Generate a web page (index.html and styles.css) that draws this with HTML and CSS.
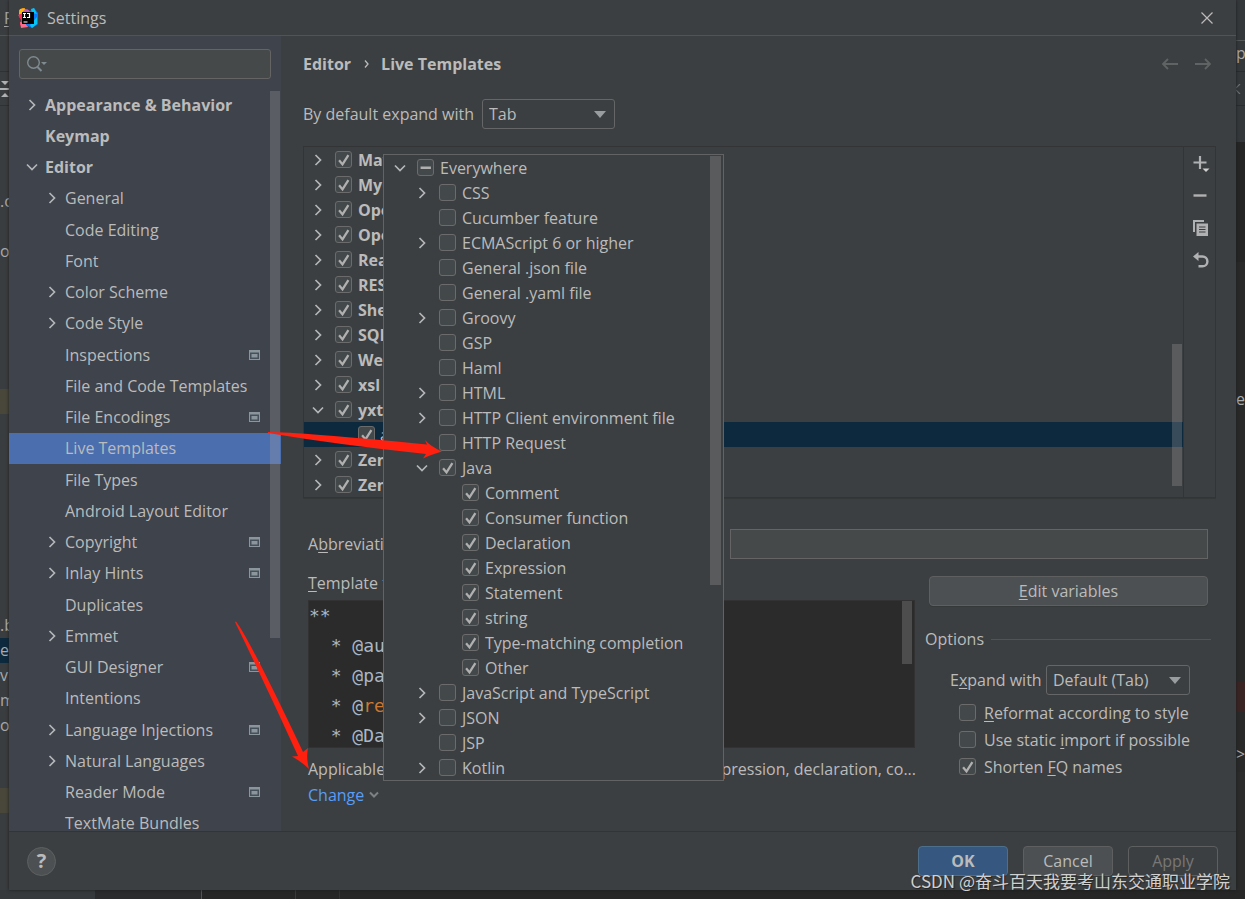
FILE: index.html
```html
<!DOCTYPE html>
<html lang="en">
<head>
<meta charset="utf-8">
<title>Settings</title>
<link rel="stylesheet" href="styles.css">
</head>
<body>
<svg class="defs" aria-hidden="true">
  <symbol id="right" viewBox="0 0 12 12"><path d="M3.5 1 8.5 6 3.5 11" fill="none" stroke="#b4b6b8" stroke-width="1.7"/></symbol>
  <symbol id="down" viewBox="0 0 12 12"><path d="M1 3.5 6 8.5 11 3.5" fill="none" stroke="#b4b6b8" stroke-width="1.7"/></symbol>
  <symbol id="proj" viewBox="0 0 11 10"><path d="M0 0h11v10H0z" fill="#8b959c"/><path d="M1 2.5h9V9H1z" fill="#46505a"/><path d="M2.5 4h6v3.5h-6z" fill="#8b959c"/></symbol>
</svg>
<div class="desktop">
  <aside class="edge edge-left" aria-hidden="true">
    <div class="e-menu"><u>F</u></div>
    <div class="e-tabs"></div>
    <div class="e-tool"><svg width="9" height="18" viewBox="0 0 9 18"><path d="M1 1h8L5 5zM0 8h9v2H0zM1 17h8L5 13z" fill="#afb1b3"/></svg></div>
    <div class="e-line h-84"></div>
    <div class="e-line h-25">.c</div>
    <div class="e-line h-25"></div>
    <div class="e-line h-25">o</div>
    <div class="e-line h-125"></div>
    <div class="e-line h-25 tan"></div>
    <div class="e-line h-200"></div>
    <div class="e-line h-25">.b</div>
    <div class="e-line h-25 navy">el</div>
    <div class="e-line h-25">vi</div>
    <div class="e-line h-25">m</div>
    <div class="e-line h-25">ou</div>
    <div class="e-line h-50"></div>
    <div class="e-line h-25 tan"></div>
  </aside>
  <div class="dialog" role="dialog" aria-label="Settings">
    <header class="titlebar">
      <svg class="logo" width="20" height="20" viewBox="0 0 20 20">
        <path d="M1 2 5 0l6 3-4 9-6-3z" fill="#fc801d"/><path d="M2 1 7 0 5 6 1 6z" fill="#fdb60d"/><path d="M0 7l5-2 4 9-2 5-5-2 1-5z" fill="#fe2857"/><path d="M2 14l6 1 2 4-7 1z" fill="#fc6b8c"/><path d="M5 3 9 1l4 3-7 4z" fill="#c757bc"/><path d="M12 3l4-3 4 5v11l-6 4-6-3z" fill="#087cfa"/><path d="M13 1l3-1 3 6-5-1zM12 17l7-8v7l-5 4z" fill="#07c3f2"/>
        <path d="M4 4h12v12H4z" fill="#000"/>
        <path d="M5 5.500h3M6.500 5.500v4M5 9.500h3M9 5.500h2.500v4H9M5.500 14h4" stroke="#fff" stroke-width="1.200" fill="none"/>
      </svg>
      <h1>Settings</h1>
      <button class="close" aria-label="Close"><svg width="12" height="12" viewBox="0 0 12 12"><path d="M.5.5l11 11M11.500.5l-11 11" stroke="#bbb" stroke-width="1.200"/></svg></button>
    </header>
    <div class="body">
      <nav class="sidebar">
        <div class="search">
          <svg width="22" height="18" viewBox="0 0 22 18"><circle cx="6.500" cy="7.500" r="5.800" fill="none" stroke="#7f8b91" stroke-width="1.400"/><path d="M10.500 12l4 4" stroke="#7f8b91" stroke-width="2"/><path d="M14 7h6l-3 3z" fill="#7f8b91"/></svg>
          <input type="text" aria-label="Search settings">
        </div>
        <ul class="tree">
          <li class="top"><svg><use href="#right"/></svg>Appearance &amp; Behavior</li>
          <li class="top leaf">Keymap</li>
          <li class="top"><svg><use href="#down"/></svg>Editor</li>
          <li><svg><use href="#right"/></svg>General</li>
          <li class="leaf">Code Editing</li>
          <li class="leaf">Font</li>
          <li><svg><use href="#right"/></svg>Color Scheme</li>
          <li><svg><use href="#right"/></svg>Code Style</li>
          <li class="leaf">Inspections<svg class="proj"><use href="#proj"/></svg></li>
          <li class="leaf">File and Code Templates</li>
          <li class="leaf">File Encodings<svg class="proj"><use href="#proj"/></svg></li>
          <li class="leaf current">Live Templates</li>
          <li class="leaf">File Types</li>
          <li class="leaf">Android Layout Editor</li>
          <li><svg><use href="#right"/></svg>Copyright<svg class="proj"><use href="#proj"/></svg></li>
          <li><svg><use href="#right"/></svg>Inlay Hints<svg class="proj"><use href="#proj"/></svg></li>
          <li class="leaf">Duplicates</li>
          <li><svg><use href="#right"/></svg>Emmet</li>
          <li class="leaf">GUI Designer<svg class="proj"><use href="#proj"/></svg></li>
          <li class="leaf">Intentions</li>
          <li><svg><use href="#right"/></svg>Language Injections<svg class="proj"><use href="#proj"/></svg></li>
          <li><svg><use href="#right"/></svg>Natural Languages</li>
          <li class="leaf">Reader Mode<svg class="proj"><use href="#proj"/></svg></li>
          <li class="leaf">TextMate Bundles</li>
        </ul>
        <span class="thumb side-thumb"></span>
      </nav>
      <main class="main">
        <div class="crumbs">
          <strong>Editor</strong>
          <svg width="6" height="8" viewBox="0 0 6 8"><path d="M1 0.500 4 4 1 7.500" fill="none" stroke="#bbb" stroke-width="1.300"/></svg>
          <strong>Live Templates</strong>
          <span class="history">
            <svg width="17" height="12" viewBox="0 0 17 12"><path d="M17 6H2M7 1 2 6l5 5" fill="none" stroke="#606364" stroke-width="1.800"/></svg>
            <svg width="17" height="12" viewBox="0 0 17 12"><path d="M0 6h15M10 1l5 5-5 5" fill="none" stroke="#606364" stroke-width="1.800"/></svg>
          </span>
        </div>
        <div class="expand-row">
          <label for="expand-default">By default expand with</label>
          <select id="expand-default"><option>Tab</option></select>
        </div>
        <section class="templates">
          <ul class="groups">
            <li><svg><use href="#right"/></svg><label><input type="checkbox" checked>Maven</label></li>
            <li><svg><use href="#right"/></svg><label><input type="checkbox" checked>MyGroup</label></li>
            <li><svg><use href="#right"/></svg><label><input type="checkbox" checked>OpenAPI</label></li>
            <li><svg><use href="#right"/></svg><label><input type="checkbox" checked>OpenAPI</label></li>
            <li><svg><use href="#right"/></svg><label><input type="checkbox" checked>React</label></li>
            <li><svg><use href="#right"/></svg><label><input type="checkbox" checked>RESTful</label></li>
            <li><svg><use href="#right"/></svg><label><input type="checkbox" checked>Shell</label></li>
            <li><svg><use href="#right"/></svg><label><input type="checkbox" checked>SQL</label></li>
            <li><svg><use href="#right"/></svg><label><input type="checkbox" checked>Web</label></li>
            <li><svg><use href="#right"/></svg><label><input type="checkbox" checked>xsl</label></li>
            <li><svg><use href="#down"/></svg><label><input type="checkbox" checked>yxtc</label></li>
            <li class="child"><label><input type="checkbox" checked>a</label></li>
            <li><svg><use href="#right"/></svg><label><input type="checkbox" checked>Zen</label></li>
            <li><svg><use href="#right"/></svg><label><input type="checkbox" checked>Zen</label></li>
          </ul>
          <span class="thumb list-thumb"></span>
          <div class="tools">
            <button aria-label="Add"><svg width="18" height="18" viewBox="0 0 18 18"><path d="M1.500 7.500h13M8 1v13" stroke="#afb1b3" stroke-width="2.200"/><path d="M10.500 13.500h7l-3.500 3.500z" fill="#d0d0d0"/></svg></button>
            <button aria-label="Remove"><svg width="18" height="18" viewBox="0 0 18 18"><path d="M1.500 8.500h13" stroke="#afb1b3" stroke-width="2.400"/></svg></button>
            <button aria-label="Duplicate"><svg width="18" height="18" viewBox="0 0 18 18"><path d="M12 2H2v11" fill="none" stroke="#afb1b3" stroke-width="2"/><path d="M4.500 4.500H16V17H4.500z" fill="#afb1b3"/><path d="M7 8h6.500M7 10.500h6.500M7 13h6.500" stroke="#3c3f41" stroke-width="1.200"/></svg></button>
            <button aria-label="Revert"><svg width="18" height="18" viewBox="0 0 18 18"><path d="M5.500 5.500h5a4.800 4.800 0 0 1 0 9.800H6.500" fill="none" stroke="#afb1b3" stroke-width="2.400"/><path d="M1 5.500 6.500 1v9z" fill="#afb1b3"/></svg></button>
          </div>
        </section>
        <section class="details">
          <div class="abbr-row">
            <label for="abbr">A<u>b</u>breviation:</label>
            <input id="abbr" type="text">
            <input class="description" type="text" aria-label="Description">
          </div>
          <div class="columns">
            <div class="left">
              <div class="field-label"><u>T</u>emplate text:</div>
              <div class="editor">
                <pre>**
  * @author
  * @param
  * @<span class="kw">return</span>
  * @Date</pre>
                <span class="thumb code-thumb"></span>
              </div>
              <div class="context"><span>Applicable</span><span>expression, declaration, co...</span></div>
              <a class="change" href="#contexts">Change <svg width="10" height="8" viewBox="0 0 10 8"><path d="M1 1.500l4 4 4-4" fill="none" stroke="#7b8185" stroke-width="2"/></svg></a>
            </div>
            <div class="right">
              <button class="btn wide"><span><u>E</u>dit variables</span></button>
              <fieldset class="options">
                <legend><span>Options</span></legend>
                <div class="opt-expand">
                  <label for="expand">E<u>x</u>pand with</label>
                  <select id="expand"><option>Default (Tab)</option></select>
                </div>
                <label class="opt"><input type="checkbox"><span><u>R</u>eformat according to style</span></label>
                <label class="opt"><input type="checkbox"><span>Use static <u>i</u>mport if possible</span></label>
                <label class="opt"><input type="checkbox" checked><span>Shorten <u>F</u>Q names</span></label>
              </fieldset>
            </div>
          </div>
        </section>
      </main>
    </div>
    <footer class="footer">
      <button class="help" aria-label="Help">?</button>
      <button class="btn primary">OK</button>
      <button class="btn">Cancel</button>
      <button class="btn" disabled>Apply</button>
    </footer>
    <div class="popup" id="contexts">
      <ul>
        <li class="l0"><svg><use href="#down"/></svg><label><input type="checkbox" class="mixed">Everywhere</label></li>
        <li><svg><use href="#right"/></svg><label><input type="checkbox">CSS</label></li>
        <li class="leaf"><label><input type="checkbox">Cucumber feature</label></li>
        <li><svg><use href="#right"/></svg><label><input type="checkbox">ECMAScript 6 or higher</label></li>
        <li class="leaf"><label><input type="checkbox">General .json file</label></li>
        <li class="leaf"><label><input type="checkbox">General .yaml file</label></li>
        <li><svg><use href="#right"/></svg><label><input type="checkbox">Groovy</label></li>
        <li class="leaf"><label><input type="checkbox">GSP</label></li>
        <li class="leaf"><label><input type="checkbox">Haml</label></li>
        <li><svg><use href="#right"/></svg><label><input type="checkbox">HTML</label></li>
        <li><svg><use href="#right"/></svg><label><input type="checkbox">HTTP Client environment file</label></li>
        <li class="leaf"><label><input type="checkbox">HTTP Request</label></li>
        <li><svg><use href="#down"/></svg><label><input type="checkbox" checked>Java</label></li>
        <li class="l2"><label><input type="checkbox" checked>Comment</label></li>
        <li class="l2"><label><input type="checkbox" checked>Consumer function</label></li>
        <li class="l2"><label><input type="checkbox" checked>Declaration</label></li>
        <li class="l2"><label><input type="checkbox" checked>Expression</label></li>
        <li class="l2"><label><input type="checkbox" checked>Statement</label></li>
        <li class="l2"><label><input type="checkbox" checked>string</label></li>
        <li class="l2"><label><input type="checkbox" checked>Type-matching completion</label></li>
        <li class="l2"><label><input type="checkbox" checked>Other</label></li>
        <li><svg><use href="#right"/></svg><label><input type="checkbox">JavaScript and TypeScript</label></li>
        <li><svg><use href="#right"/></svg><label><input type="checkbox">JSON</label></li>
        <li class="leaf"><label><input type="checkbox">JSP</label></li>
        <li><svg><use href="#right"/></svg><label><input type="checkbox">Kotlin</label></li>
      </ul>
      <span class="thumb popup-thumb"></span>
    </div>
  </div>
  <aside class="edge edge-right" aria-hidden="true">
    <div class="r-top"></div>
    <div class="r-run">p</div>
    <div class="r-tab"><svg width="9" height="10" viewBox="0 0 9 10"><path d="M4 0 -1 5l5 5" fill="none" stroke="#6e7173" stroke-width="1.200"/></svg></div>
    <div class="r-gap"></div>
    <div class="r-shade"></div>
    <div class="r-code h-125"></div>
    <div class="r-code h-25">e</div>
    <div class="r-code h-270"></div>
    <div class="r-code h-30 red"></div>
    <div class="r-code h-30"></div>
    <div class="r-code h-30">&gt;</div>
  </aside>
  <div class="under" aria-hidden="true"><span class="u-panel"></span><span class="u-gutter"></span><span class="u-a"></span><span class="u-b"></span></div>
</div>
<svg class="arrows" width="1245" height="899" viewBox="0 0 1245 899" aria-hidden="true">
  <path d="M268 432Q300 432 427 444.500L425 440Q430 446 442 451.500Q430 455 423 458.500L426 454Q340 445 268 433z" fill="#ff2010"/>
  <path d="M236 621.500Q250 640 303 752L308 748Q306 758 309 769Q302 762 292 756.500L298 756Q268 690 235 622z" fill="#ff2010"/>
</svg>
<div class="watermark">CSDN @奋斗百天我要考山东交通职业学院</div>
</body>
</html>
```
FILE: styles.css
```css
* { box-sizing: border-box; }

body {
  margin: 0;
  height: 100vh;
  overflow: hidden;
  position: relative;
  background: #2b2b2b;
  color: #bbbbbb;
  font: 16px/24px "Open Sans", "Noto Sans", sans-serif;
}

ul { list-style: none; margin: 0; padding: 0; }
button, input, select { font: inherit; color: inherit; margin: 0; }
button { padding: 0; border: 0; background: none; }
svg { display: block; flex: none; }
u { text-decoration-thickness: 1px; text-underline-offset: 2px; }

.defs { position: absolute; width: 0; height: 0; }

.desktop {
  height: 100%;
  display: grid;
  grid-template-columns: 9px minmax(0, 1fr) 9px;
  grid-template-rows: minmax(0, 1fr) 9px;
}

/* IDE window behind the dialog */
.edge { overflow: hidden; white-space: nowrap; color: #a9abad; }
.edge-left { background: #3a3d3f; }
.edge-right { background: #2b2b2b; }
.e-menu { height: 36px; padding: 6px 0 0 4px; border-bottom: 1px solid #505355; }
.e-tabs { height: 36px; border-bottom: 1px solid #2f3132; }
.e-tool { height: 34px; padding-top: 8px; border-bottom: 1px solid #2f3132; }
.e-line { line-height: 25px; }
.h-25 { height: 25px; }
.h-30 { height: 30px; }
.h-50 { height: 50px; }
.h-84 { height: 83px; }
.h-125 { height: 125px; }
.h-200 { height: 199px; }
.h-270 { height: 270px; }
.tan { background: #49463a; }
.navy { background: #0d293e; }
.r-top { height: 41px; background: #35383a; border-bottom: 1px solid #555859; }
.r-run { height: 31px; background: #35383a; border-bottom: 1px solid #2a2c2d; }
.r-tab { height: 34px; background: #35383a; border-bottom: 1px solid #2a2c2d; padding-top: 12px; }
.r-gap { height: 36px; background: #35383a; }
.r-shade { height: 120px; background: #252525; }
.r-code { line-height: 25px; background: #292929; }
.r-code.red { background: #3a2323; }
.under { grid-column: 1 / -1; display: flex; background: #262626; }
.u-panel { width: 95px; background: #36393b; }
.u-gutter { width: 107px; background: #2a2b2c; border-right: 1px solid #555; }
.u-a { width: 94px; border-right: 1px solid #3a3a3a; }
.u-b { width: 44px; border-right: 1px solid #333; }

.dialog {
  position: relative;
  display: flex;
  flex-direction: column;
  background: #3c3f41;
  box-shadow: 0 0 3px #1c1d1e;
  min-height: 0;
}

.titlebar {
  height: 36px;
  flex: none;
  display: flex;
  align-items: center;
  gap: 9px;
  padding: 0 23px 0 9px;
  border-bottom: 1px solid #515456;
}
.titlebar h1 { margin: 0; flex: 1; font-size: 16px; font-weight: 400; }

.body { flex: 1; display: flex; min-height: 0; }

/* settings tree */
.sidebar {
  position: relative;
  width: 272px;
  flex: none;
  display: flex;
  flex-direction: column;
  overflow: hidden;
  background: #3e434c;
}
.search {
  height: 30px;
  flex: none;
  margin: 13px 10px 10px;
  padding-left: 7px;
  display: flex;
  align-items: center;
  border: 1px solid #646464;
  border-radius: 3px;
  background: #45494a;
}
.search input { flex: 1; min-width: 0; border: 0; background: none; outline: 0; }
.tree { flex: 1; display: grid; grid-auto-rows: 1fr; margin-bottom: -8px; }
.tree li { display: flex; align-items: center; padding: 0 21px 0 37px; gap: 7px; white-space: nowrap; min-height: 0; }
.tree svg { width: 12px; height: 12px; }
.tree .leaf { padding-left: 56px; }
.tree .top { padding-left: 17px; font-weight: 700; }
.tree .top.leaf { padding-left: 36px; }
.tree .proj { width: 11px; height: 10px; margin-left: auto; }
.tree .current { background: #4b6eaf; }

.thumb { position: absolute; background: rgba(166, 166, 166, 0.28); }
.side-thumb { right: 1px; top: 55px; width: 10px; height: 547px; }

/* main panel */
.main { flex: 1; min-width: 0; padding: 0 20px 0 22px; display: flex; flex-direction: column; }
.crumbs { height: 56px; display: flex; align-items: center; gap: 11px; }
.crumbs svg { margin-left: 2px; }
.history { margin-left: auto; margin-right: 4px; display: flex; gap: 15px; }

.expand-row { display: flex; align-items: center; gap: 8px; margin: 7px 0 17px; }

select {
  height: 30px;
  padding: 0 6px;
  appearance: none;
  border: 1px solid #646668;
  border-radius: 3px;
  outline: 0;
  background: #3c3f41 url("data:image/svg+xml,%3Csvg xmlns='http://www.w3.org/2000/svg' width='12' height='7'%3E%3Cpath d='M0 0h12L6 7z' fill='%239a9da0'/%3E%3C/svg%3E") no-repeat right 8px center;
}
#expand-default { width: 133px; }

.templates { position: relative; display: flex; border: 1px solid #323435; box-shadow: 0 1px #353839; }
.groups { flex: 1; }
.groups li, .popup li { height: 25px; display: flex; align-items: center; }
.groups li { padding-left: 8px; gap: 11px; font-weight: 700; }
.groups svg, .popup li svg { width: 12px; height: 12px; }
.groups label, .popup label { display: flex; align-items: center; white-space: nowrap; }
.groups label { gap: 6px; }
.groups .child { padding-left: 54px; background: #0d293e; }
.groups .child label { gap: 5px; font-weight: 400; }
.list-thumb { right: 33px; top: 197px; width: 10px; height: 142px; }
.tools { width: 32px; border-left: 1px solid #323435; padding: 8px 0 0 8px; display: flex; flex-direction: column; gap: 14px; }

input[type="checkbox"] {
  appearance: none;
  width: 17px;
  height: 17px;
  flex: none;
  border: 1px solid #6b6b6b;
  border-radius: 3px;
  background: #43494a center / 16px 16px no-repeat;
}
input[type="checkbox"]:checked { background-image: url("data:image/svg+xml,%3Csvg xmlns='http://www.w3.org/2000/svg' viewBox='0 0 16 16'%3E%3Cpath d='M3.500 8.500l3.300 4L12.500 3.500' fill='none' stroke='%23b0b0b0' stroke-width='2.200'/%3E%3C/svg%3E"); }
input[type="checkbox"].mixed { background-image: url("data:image/svg+xml,%3Csvg xmlns='http://www.w3.org/2000/svg' viewBox='0 0 16 16'%3E%3Cpath d='M3 8h10' stroke='%23b0b0b0' stroke-width='2.600'/%3E%3C/svg%3E"); }

.details { padding: 31px 8px 0 5px; }
.abbr-row { display: flex; align-items: center; gap: 12px; }
.abbr-row input { height: 30px; border: 1px solid #646464; background: #45494a; outline: 0; min-width: 0; flex: 1; }
.abbr-row .description { flex: none; width: 478px; }

.columns { display: grid; grid-template-columns: minmax(0, 1fr) 279px; gap: 14px; }
.field-label { margin: 12px 0 5px; }
.editor { position: relative; height: 148px; overflow: hidden; background: #2b2b2b; border: 1px solid #323232; color: #a9b7c6; }
.editor pre { margin: 0; font: 18px/30px "DejaVu Sans Mono", monospace; }
.kw { color: #cc7832; }
.code-thumb { right: 2px; top: 0; width: 10px; height: 63px; }
.context { display: flex; justify-content: space-between; margin: 9px -1px 2px 0; white-space: nowrap; }
.change { display: inline-flex; align-items: center; gap: 5px; color: #589df6; text-decoration: none; }

.btn {
  width: 90px;
  height: 30px;
  border: 1px solid #5e6060;
  border-radius: 4px;
  background: #4c5052;
  box-shadow: 0 1px #36393a;
}
.btn.wide { width: 100%; margin-top: 17px; display: block; }
.btn.primary { background: #365880; border-color: #4c708c; font-weight: 700; }
.btn:disabled { background: none; color: #777777; box-shadow: none; }

.options { border: 0; margin: 21px -3px 0 -4px; padding: 0; min-width: 0; }
.options legend { width: 100%; padding: 0; display: flex; align-items: center; gap: 7px; }
.options legend::after { content: ""; flex: 1; height: 1px; background: #515456; }
.opt-expand { display: flex; align-items: center; justify-content: space-between; padding: 0 21px 0 25px; margin: 14px 0 4px; }
.opt-expand select { width: 144px; }
.opt { display: flex; align-items: center; gap: 8px; height: 27px; padding-left: 34px; white-space: nowrap; }

.footer { height: 59px; flex: none; display: flex; align-items: center; gap: 15px; padding: 0 18px; border-top: 1px solid #323435; }
.help { width: 29px; height: 29px; margin-right: auto; border: 1px solid #5e6060; border-radius: 50%; background: #4c5052; font-size: 20px; font-weight: 700; }

/* context chooser */
.popup {
  position: absolute;
  left: 374px;
  top: 154px;
  width: 341px;
  height: 627px;
  overflow: hidden;
  border: 1px solid #616365;
  background: #3c3f41;
}
.popup label { gap: 6px; }
.popup li { padding-left: 32px; gap: 11px; }
.popup .l0 { padding-left: 10px; }
.popup .leaf { padding-left: 55px; }
.popup .l2 { padding-left: 78px; }
.popup-thumb { right: 2px; top: 1px; width: 11px; height: 429px; }

.arrows { position: absolute; left: 0; top: 0; pointer-events: none; }
.watermark {
  position: absolute;
  right: 15px;
  bottom: 6px;
  font: 17px/24px "Noto Sans CJK SC", sans-serif;
  color: #d0d0d0;
  text-shadow: 1px 1px 1px #222222;
  white-space: nowrap;
}
```
